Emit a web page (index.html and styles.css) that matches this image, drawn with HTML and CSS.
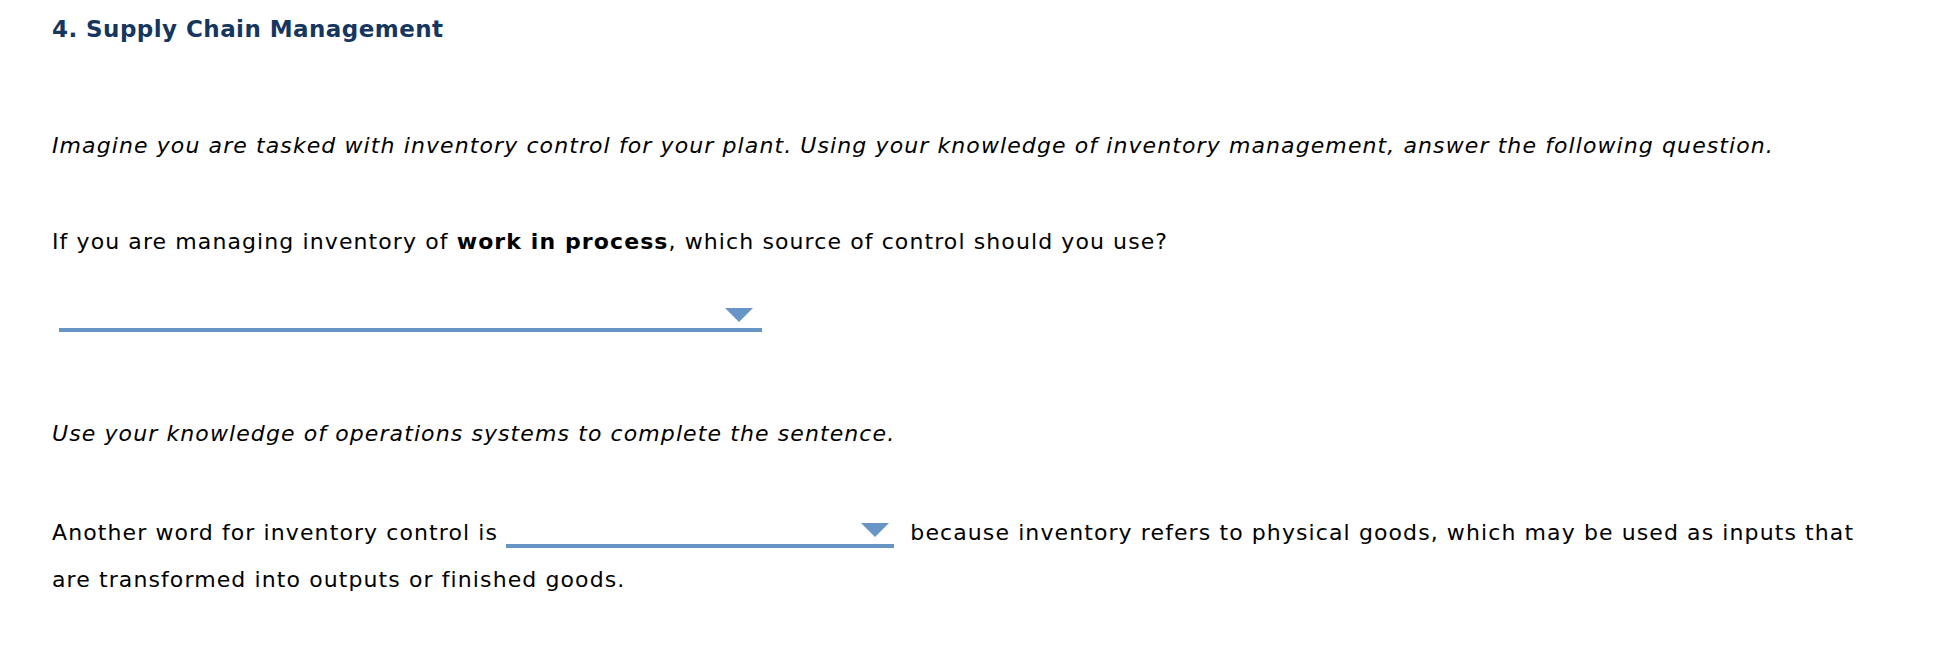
FILE: index.html
```html
<!DOCTYPE html>
<html>
<head>
<meta charset="utf-8">
<link rel="stylesheet" href="styles.css">
</head>
<body>
<div class="page">
  <h1 class="title">4. Supply Chain Management</h1>
  <p class="intro first">Imagine you are tasked with inventory control for your plant. Using your knowledge of inventory management, answer the following question.</p>
  <p class="q">If you are managing inventory of <b>work in process</b>, which source of control should you use?</p>
  <div class="select wide"><span class="arrow"></span></div>
  <p class="intro second">Use your knowledge of operations systems to complete the sentence.</p>
  <p class="sentence">Another word for inventory control is <span class="select inline"><span class="arrow"></span></span> because inventory refers to physical goods, which may be used as inputs that are transformed into outputs or finished goods.</p>
</div>
</body>
</html>
```

FILE: styles.css
```css
html, body {
  margin: 0;
  padding: 0;
  background: #ffffff;
}
.page {
  padding: 14px 0 0 52px;
  width: 1820px;
  font-family: "DejaVu Sans", Verdana, sans-serif;
  font-size: 22px;
  letter-spacing: 1.1px;
  color: #000;
}
.title {
  margin: 0;
  font-size: 23px;
  line-height: 30px;
  font-weight: bold;
  letter-spacing: 0.45px;
  color: #14365f;
}
.intro {
  margin: 0;
  font-style: italic;
  line-height: 30px;
}
.intro.first {
  margin-top: 87px;
}
.q {
  margin: 66px 0 0 0;
  line-height: 30px;
}
.select {
  box-sizing: border-box;
  border-bottom: 4px solid #6796c6;
}
.select.wide {
  display: flex;
  justify-content: flex-end;
  align-items: center;
  margin: 45px 0 0 7px;
  width: 703px;
  height: 30px;
  padding: 0 9px 0 0;
}
.arrow {
  display: block;
  width: 0;
  height: 0;
  border-left: 14px solid transparent;
  border-right: 14px solid transparent;
  border-top: 14px solid #6796c6;
}
.second {
  margin-top: 87px;
}
.sentence {
  margin: 60px 0 0 0;
  line-height: 47px;
}
.select.inline {
  display: inline-block;
  overflow: hidden;
  vertical-align: -8px;
  width: 388px;
  height: 34px;
  padding: 0 5px 0 0;
  margin: 0 8px 0 0;
}
.select.inline .arrow {
  float: right;
  margin-top: 9px;
}
```
